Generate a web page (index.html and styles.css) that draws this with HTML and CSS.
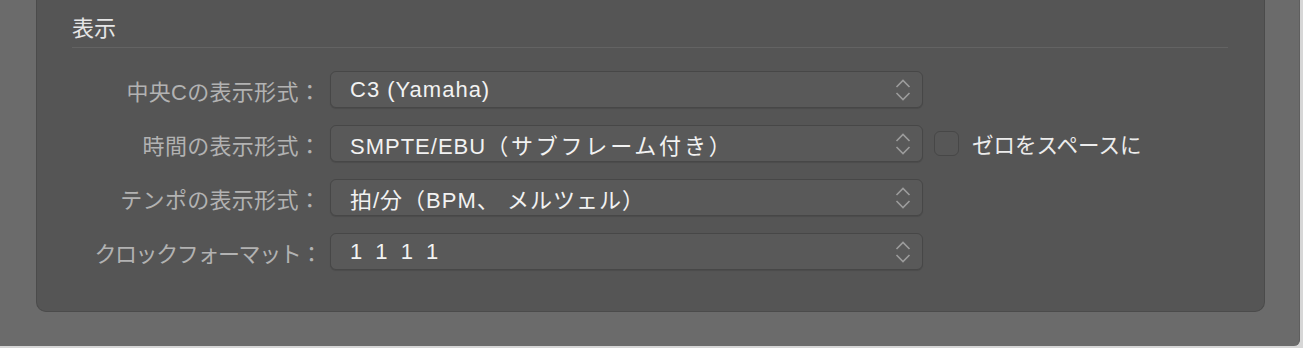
FILE: index.html
```html
<!DOCTYPE html>
<html lang="ja">
<head>
<meta charset="utf-8">
<link rel="stylesheet" href="styles.css">
</head>
<body>
<div class="window">
  <div class="panel">
    <div class="title">表示</div>
    <div class="divider"></div>
    <div class="rows">
      <div class="row">
        <div class="label">中央Cの表示形式：</div>
        <div class="popup"><span class="value">C3 (Yamaha)</span>
          <svg class="chev" width="16" height="24" viewBox="0 0 16 24"><path d="M1.5 9 L8 2.5 L14.5 9 M1.5 15 L8 21.5 L14.5 15" fill="none" stroke="#9c9c9c" stroke-width="1.6"/></svg>
        </div>
      </div>
      <div class="row">
        <div class="label">時間の表示形式：</div>
        <div class="popup"><span class="value">SMPTE/EBU<span class="ja">（サブフレーム付き）</span></span>
          <svg class="chev" width="16" height="24" viewBox="0 0 16 24"><path d="M1.5 9 L8 2.5 L14.5 9 M1.5 15 L8 21.5 L14.5 15" fill="none" stroke="#9c9c9c" stroke-width="1.6"/></svg>
        </div>
        <div class="check"><span class="box"></span><span class="check-label">ゼロをスペースに</span></div>
      </div>
      <div class="row">
        <div class="label">テンポの表示形式：</div>
        <div class="popup"><span class="value">拍/分（BPM、 メルツェル）</span>
          <svg class="chev" width="16" height="24" viewBox="0 0 16 24"><path d="M1.5 9 L8 2.5 L14.5 9 M1.5 15 L8 21.5 L14.5 15" fill="none" stroke="#9c9c9c" stroke-width="1.6"/></svg>
        </div>
      </div>
      <div class="row">
        <div class="label tight">クロックフォーマット：</div>
        <div class="popup"><span class="value digits">1 1 1 1</span>
          <svg class="chev" width="16" height="24" viewBox="0 0 16 24"><path d="M1.5 9 L8 2.5 L14.5 9 M1.5 15 L8 21.5 L14.5 15" fill="none" stroke="#9c9c9c" stroke-width="1.6"/></svg>
        </div>
      </div>
    </div>
  </div>
</div>
</body>
</html>
```
FILE: styles.css
```css
html, body {
  margin: 0;
  padding: 0;
}
body {
  width: 1303px;
  height: 348px;
  background: #d6d6d6;
  overflow: hidden;
  font-family: "Liberation Sans", "Noto Sans CJK JP", sans-serif;
}
.window {
  width: 1300px;
  height: 346px;
  box-sizing: border-box;
  background: #6b6b6b;
  border-bottom-right-radius: 6px;
  padding-left: 36px;
  border-right: 1px solid #5f5f5f;
}
.panel {
  width: 1229px;
  height: 312px;
  box-sizing: border-box;
  background: #555555;
  border: 1px solid #4b4b4b;
  border-top: none;
  border-radius: 0 0 10px 10px;
  padding: 11px 36px 0 35px;
}
.title {
  font-size: 22px;
  line-height: 30px;
  color: #e6e6e6;
  font-family: "Noto Sans CJK JP", sans-serif;
}
.divider {
  height: 1px;
  background: #636363;
  margin-top: 6px;
}
.rows {
  display: flex;
  flex-direction: column;
  gap: 17px;
  margin-top: 23px;
}
.row {
  display: flex;
  align-items: center;
  height: 37px;
}
.label {
  width: 249px;
  flex: none;
  text-align: right;
  font-size: 22px;
  color: #b2b2b2;
  white-space: nowrap;
  margin-right: 9px;
  letter-spacing: 0.3px;
}
.label.tight {
  letter-spacing: -1.4px;
}
.popup {
  width: 593px;
  height: 37px;
  flex: none;
  box-sizing: border-box;
  background: #595959;
  border: 1px solid #474747;
  border-radius: 6px;
  box-shadow: 0 1px 1px rgba(0,0,0,0.12);
  display: flex;
  align-items: center;
  justify-content: space-between;
  padding: 0 11px 0 19px;
}
.value {
  font-size: 22px;
  letter-spacing: 1px;
  color: #f2f2f2;
  white-space: nowrap;
}
.value .ja {
  letter-spacing: 2.8px;
}
.value.digits {
  word-spacing: 5px;
}
.chev {
  display: block;
}
.check {
  display: flex;
  align-items: center;
  margin-left: 11px;
}
.box {
  width: 25px;
  height: 25px;
  box-sizing: border-box;
  border: 1px solid #474747;
  border-radius: 6px;
  background: #575757;
}
.check-label {
  margin-left: 13px;
  font-size: 21.5px;
  color: #ececec;
}
```
